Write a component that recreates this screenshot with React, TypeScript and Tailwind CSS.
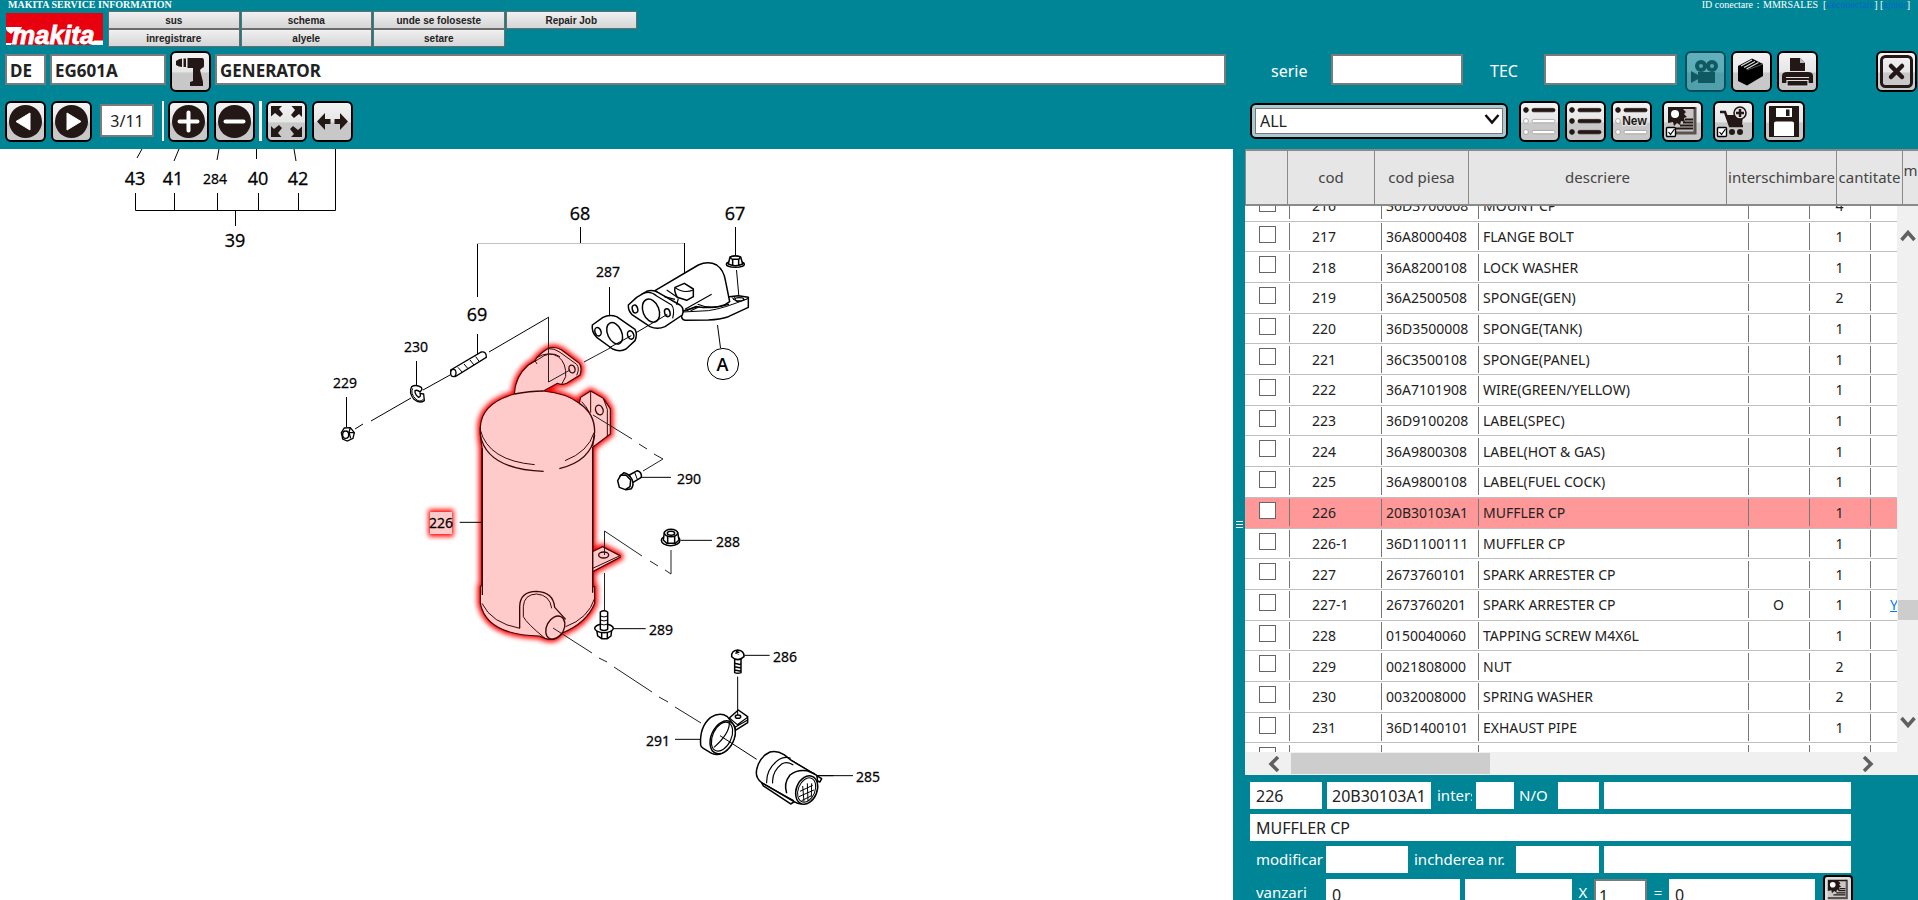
import React from "react";

type Part = {
  code: string;
  number: string;
  name: string;
  swap?: string;
  qty: number;
  note?: string;
};

const parts: Part[] = [
  { code: "216", number: "36D3700008", name: "MOUNT CP", qty: 4 },
  { code: "217", number: "36A8000408", name: "FLANGE BOLT", qty: 1 },
  { code: "218", number: "36A8200108", name: "LOCK WASHER", qty: 1 },
  { code: "219", number: "36A2500508", name: "SPONGE(GEN)", qty: 2 },
  { code: "220", number: "36D3500008", name: "SPONGE(TANK)", qty: 1 },
  { code: "221", number: "36C3500108", name: "SPONGE(PANEL)", qty: 1 },
  { code: "222", number: "36A7101908", name: "WIRE(GREEN/YELLOW)", qty: 1 },
  { code: "223", number: "36D9100208", name: "LABEL(SPEC)", qty: 1 },
  { code: "224", number: "36A9800308", name: "LABEL(HOT & GAS)", qty: 1 },
  { code: "225", number: "36A9800108", name: "LABEL(FUEL COCK)", qty: 1 },
  { code: "226", number: "20B30103A1", name: "MUFFLER CP", qty: 1 },
  { code: "226-1", number: "36D1100111", name: "MUFFLER CP", qty: 1 },
  { code: "227", number: "2673760101", name: "SPARK ARRESTER CP", qty: 1 },
  { code: "227-1", number: "2673760201", name: "SPARK ARRESTER CP", swap: "O", qty: 1, note: "Y" },
  { code: "228", number: "0150040060", name: "TAPPING SCREW M4X6L", qty: 1 },
  { code: "229", number: "0021808000", name: "NUT", qty: 2 },
  { code: "230", number: "0032008000", name: "SPRING WASHER", qty: 2 },
  { code: "231", number: "36D1400101", name: "EXHAUST PIPE", qty: 1 },
];

const INK = "#231815";

function ToolButton({
  label,
  disabled,
  className = "",
  children,
}: {
  label: string;
  disabled?: boolean;
  className?: string;
  children: React.ReactNode;
}) {
  return (
    <button
      type="button"
      aria-label={label}
      disabled={disabled}
      className={`size-[41px] shrink-0 overflow-hidden rounded-md border-2 border-black bg-linear-to-b from-[#f3f3f3] from-0% via-[#e6e6e6] via-50% to-[#c8c8c8] to-55% disabled:opacity-40 ${className}`}
    >
      <svg viewBox="0 0 37 37" className="block size-full">
        {children}
      </svg>
    </button>
  );
}

function ListIcon({ filled, text }: { filled: boolean[]; text?: string }) {
  return (
    <>
      {filled.map((on, i) => {
        const y = 7 + i * 11;
        return (
          <g key={i} fill={on ? INK : "#fff"} stroke={on ? INK : "#999"} strokeWidth="0.8">
            <circle cx="5" cy={y} r="2.4" />
            {!(text && i === 1) && <rect x="11" y={y - 1.6} width="23" height="3.4" rx="1.6" />}
          </g>
        );
      })}
      {text && (
        <text x="21.5" y="22" textAnchor="middle" fontSize="12" fontWeight="700" fontFamily="'Liberation Sans', sans-serif" fill={INK} stroke="#e4e4e4" strokeWidth="2" paintOrder="stroke">
          {text}
        </text>
      )}
    </>
  );
}

function TickBox() {
  return (
    <g>
      <rect x="2.5" y="24.5" width="9" height="9" rx="1" fill="#fff" stroke="#000" strokeWidth="1.4" />
      <path d="M4.500 29l2 2.500 4-5.500" fill="none" stroke="#000" strokeWidth="1.200" />
    </g>
  );
}

function PictureIcon() {
  return (
    <>
      <path d="M4 4h28v27H4z" fill="#c9c6c5" />
      <path d="M31 4v26H4" fill="none" stroke="#5b5351" strokeWidth="3" />
      <path d="M4 4h27v2H19l3 3-2 2 3 3-3 1 1 4-4-1-1 4-3-2-3 3-1-4-5 1z" fill={INK} />
      <circle cx="11" cy="11" r="4" fill="#fff" />
      <path d="M21 16.500h8M19 19.500h10M16 22.500h13M12 25.500h17" stroke={INK} strokeWidth="1.800" />
    </>
  );
}

function Disc() {
  return <circle cx="18.500" cy="18.500" r="16.500" fill={INK} />;
}

function Logo() {
  return (
    <svg viewBox="0 0 97 32" className="mt-0.5 h-8 w-[97px] shrink-0" role="img" aria-label="makita">
      <rect width="97" height="32" fill="#e8000e" />
      <path d="M0 14H16L14 18H8L5 21L1 18L0 16z" fill="#fff" />
      <path d="M0 30H6L5 32H0zM88 27.500H97V32H86z" fill="#fff" />
      <text x="6" y="31" fontFamily="'Liberation Sans', sans-serif" fontSize="26" fontWeight="700" fontStyle="italic" fill="#fff" stroke="#fff" strokeWidth="0.8">
        makita
      </text>
    </svg>
  );
}

function Callout({ x, y, children, narrow }: { x: number; y: number; children: string; narrow?: boolean }) {
  return (
    <text
      x={x}
      y={y}
      textAnchor="middle"
      fontSize={narrow ? 14 : 18}
      fontFamily="'Open Sans', 'Noto Sans', sans-serif"
      fill="#000"
      stroke="#000"
      strokeWidth="0.3"
    >
      {children}
    </text>
  );
}

/* Outline of the muffler body, elbow, bracket, foot tab and outlet. */
const mufflerOutline =
  "M186 770 Q181 750 181 712 Q184 640 283 612 Q285 560 325 525 L345 512 Q352 496 385 475 Q405 468 425 480 L478 520 Q487 532 480 555 L440 580 Q425 586 412 580 L370 603 Q440 610 478 640 L482 622 L512 603 L550 625 L571 657 L571 732 L518 772 L518 1085 L548 1070 L600 1097 L600 1102 L518 1145 L518 1190 L524 1190 L524 1240 Q500 1300 425 1330 Q405 1355 375 1345 L358 1338 Q200 1335 181 1240 L181 1190 L186 1185 Z";

function Diagram() {
  return (
    <svg viewBox="0 149 1233 751" width="1233" height="751" className="block shrink-0" role="img" aria-label="EG601A 3/11">
      <defs>
        <filter id="glow" x="-20%" y="-20%" width="140%" height="140%">
          <feGaussianBlur stdDeviation="8" />
        </filter>
        <filter id="labelGlow" x="-60%" y="-60%" width="220%" height="220%">
          <feGaussianBlur stdDeviation="2.500" />
        </filter>
      </defs>

      <g fill="none" stroke="#000" strokeWidth="1">
        <path d="M142 149L137 158M179 149L174 161M219 149L217 160M256.500 149V159M294 149L296 161" />
        <path d="M335.500 149V210.500H135.500V193M174.500 193V210M217.500 193V210M258.500 193V210M298.500 193V210M235.500 210V226" />
        <path d="M477.500 243V297M477.500 334V354M580.500 227V243M684.500 243V273M735.500 227V256M609.500 287V316M416.500 361V386M346.500 397V427" />
        <path d="M477 243.500H684" stroke="#c4c4c4" />
        <path d="M355 429L363 424M371 421L411 398M423 390L450 375M489 352L549 317" />
        <path d="M717.500 325L720.500 348M736.500 270L739 298" />
        <circle cx="723" cy="364" r="15.600" />
      </g>

      {/* nut 229, lock washer 230 and stud 69 */}
      <g transform="translate(90 140) scale(.33333)" fill="#fff" stroke="#000" strokeWidth="4">
        <path d="M754 878L763 864L781 863L793 878L789 895L772 903L758 897Z" />
        <ellipse cx="767" cy="884" rx="9" ry="11" />
        <path d="M781 863L777 877L782 895M777 877L793 878" fill="none" />
        <path d="M994 742Q978 732 965 740Q955 758 972 778Q988 792 1003 782L1001 762L990 760Q994 770 986 772Q974 764 975 752Q982 748 990 756L996 748Z" strokeLinejoin="round" />
        <path d="M968 745Q960 760 978 778Q990 788 1000 778" fill="none" strokeWidth="3" />
        <path d="M1082 690L1174 636Q1190 634 1189 652L1096 710Q1080 708 1082 690Z" />
        <ellipse cx="1090" cy="699" rx="8" ry="11" />
        <path d="M1104 682L1116 696M1122 672L1134 686M1140 660L1152 675M1157 650L1168 665" strokeWidth="3" />
      </g>

      <path d={mufflerOutline} transform="translate(420 190) scale(.33333)" fill="#f00" stroke="#f00" strokeWidth="18" filter="url(#glow)" />
      <path d={mufflerOutline} transform="translate(420 190) scale(.33333)" fill="#ffcaca" stroke="#4a0000" strokeWidth="3.500" />

      {/* muffler interior lines */}
      <g transform="translate(420 190) scale(.33333)" fill="none" stroke="#3a0505" strokeWidth="4">
        <path d="M283 612Q330 603 370 603M478 640Q524 670 524 725L518 768" />
        <path d="M181 712L181 735Q200 838 371 844M418 836Q515 812 524 735" />
        <path d="M181 720Q205 812 344 824M435 812Q505 785 522 728" strokeWidth="3" />
        <path d="M187 775V1215M518 770V1208" />
        <path d="M345 512L351 522M350 503Q385 482 415 500Q440 520 437 560L425 583M325 525L355 508Q390 480 420 500" strokeWidth="3" />
        <path d="M385 476Q402 474 420 487L470 523Q480 535 470 556" strokeWidth="3" />
        <ellipse cx="456" cy="537" rx="9" ry="12" transform="rotate(-15 456 537)" />
        <path d="M512 603V668M485 635Q500 650 508 668M550 625L562 658V738" strokeWidth="3" />
        <ellipse cx="538" cy="660" rx="11" ry="15" transform="rotate(-20 538 660)" />
        <path d="M518 1085V1145M518 1135L598 1098" strokeWidth="3" />
        <ellipse cx="551" cy="1095" rx="15" ry="9" />
        <path d="M186 1240Q215 1300 300 1315M524 1225Q505 1285 437 1310" strokeWidth="3" />
        <path d="M299 1315V1250Q300 1204 350 1204Q400 1206 404 1252L437 1288" />
        <path d="M310 1280V1250Q312 1213 350 1212Q390 1215 395 1255M310 1280Q320 1300 375 1345" strokeWidth="3" />
        <ellipse cx="406" cy="1313" rx="26" ry="37" transform="rotate(28 406 1313)" />
      </g>

      {/* thin lines that run over the muffler */}
      <g fill="none" stroke="#222" strokeWidth="1">
        <path d="M548.500 317V382L570 370" />
        <path d="M584 362L625 340" />
        <path d="M593 415L632 439M639 444L647 449M654 454L663 459L643 471" />
        <path d="M604.500 555V531L642 556M650 561L658 566M665 570L671 574V550M604.500 573V611" />
        <path d="M553 628L592 653M599 658L607 662M614 667L652 692M659 697L668 702M675 707L701 723" />
      </g>

      {/* gasket 287, manifold 68 and nut 67 */}
      <g transform="translate(420 190) scale(.33333)" fill="#fff" stroke="#000" strokeWidth="4.500" strokeLinejoin="round">
        <path d="M517 405L549 382Q568 372 590 380L645 418Q653 432 645 452L618 477Q600 487 578 477L530 442Q514 425 517 405Z" />
        <ellipse cx="584" cy="430" rx="21" ry="34" transform="rotate(-25 584 430)" />
        <ellipse cx="534" cy="425" rx="9" ry="13" transform="rotate(-20 534 425)" />
        <ellipse cx="632" cy="435" rx="9" ry="13" transform="rotate(-20 632 435)" />

        <path d="M928 320L955 317L985 322V352L925 380Q900 388 865 390L795 391Q783 388 785 375L790 360L860 330Z" />
        <path d="M788 366L865 362Q910 356 985 325" fill="none" strokeWidth="3" />
        <path d="M705 302L835 225Q865 212 890 225Q912 240 917 275L929 335Q900 360 830 350L790 363Z" />
        <path d="M875 313L795 358M830 348L800 362M838 350L812 362M833 343Q870 360 927 343" fill="none" strokeWidth="3.500" />
        <path d="M935 322L950 335L980 328M945 318L940 330" fill="none" strokeWidth="3" />
        <ellipse cx="958" cy="328" rx="13" ry="5" strokeWidth="4" />
        <path d="M625 345L650 322L680 304Q700 298 715 308L780 345Q794 355 787 375L735 410Q712 420 690 410L637 375Q624 362 625 345Z" />
        <path d="M665 312Q690 300 710 318L755 345Q765 358 758 385" fill="none" strokeWidth="3.500" />
        <path d="M765 292L793 280L820 297V320L800 331L772 322Q762 305 765 292Z" />
        <path d="M765 292Q790 312 820 300M740 300L772 322M733 320L765 328M770 345L775 325" fill="none" strokeWidth="3.500" />
        <ellipse cx="693" cy="362" rx="24" ry="36" transform="rotate(-22 693 362)" />
        <ellipse cx="645" cy="357" rx="8" ry="12" transform="rotate(-15 645 357)" />
        <ellipse cx="742" cy="368" rx="8" ry="12" transform="rotate(-15 742 368)" />
        <path d="M568 473L634 437M650 427L742 373" fill="none" strokeWidth="3" />

        <ellipse cx="946" cy="223" rx="27" ry="9" />
        <path d="M925 222L930 201Q946 195 962 201L968 222Q946 232 925 222ZM938 204V226M956 204V226" />
        <ellipse cx="946" cy="203" rx="14" ry="5" />

        {/* bolt 290 */}
        <path d="M628 855L652 842Q666 846 664 862L638 878Z" />
        <path d="M600 858L612 848Q625 850 636 868Q643 885 634 896L618 899Z" />
        <path d="M593 872L602 856L618 855L632 870L630 890L616 899L598 892Z" />
        <path d="M644 847L652 868M662 862H753" fill="none" strokeWidth="3" />
      </g>

      {/* nut 288 and bolt 289 */}
      <g transform="translate(420 460) scale(.33333)" fill="#fff" stroke="#000" strokeWidth="4.500" strokeLinejoin="round">
        <ellipse cx="752" cy="241" rx="28" ry="16" />
        <path d="M730 240L733 217Q752 203 773 217L777 240L767 250H740ZM743 225V250M764 225V250" />
        <ellipse cx="753" cy="219" rx="20" ry="11" />
        <ellipse cx="753" cy="220" rx="11" ry="6" />
        <path d="M783 241H876M580 506H677M119 187H186" strokeWidth="3" />
        <path d="M530 510L533 528L545 536H562L573 528L575 510ZM545 518V536M562 518V536" />
        <ellipse cx="552" cy="505" rx="28" ry="13" />
        <path d="M541 508V456Q552 448 563 456V508Q552 515 541 508Z" />
        <path d="M541 468Q552 474 563 468M541 480Q552 486 563 480M541 492Q552 498 563 492" fill="none" strokeWidth="3" />
      </g>

      {/* screw 286, clamp 291 and spark arrester 285 */}
      <g transform="translate(620 630) scale(.33333)" fill="#fff" stroke="#000" strokeWidth="4.500" strokeLinejoin="round">
        <path d="M344 88H363V128Q353 132 344 128ZM344 100L363 104M344 110L363 114M344 120L363 124" />
        <path d="M335 80Q333 62 353 60Q373 62 372 80Q353 98 335 80ZM346 70L358 66M349 63L356 73" />
        <path d="M373 76H449M165 328H241M590 437H699" strokeWidth="3" />
        <path d="M328 264L355 240L383 260V278L345 302L322 280Z" />
        <path d="M328 264L352 284L383 262M345 292L383 270" fill="none" strokeWidth="3.500" />
        <path d="M242 345Q238 290 272 262Q300 245 322 260L345 290Q352 325 320 360Q300 380 275 370L250 355Q242 350 242 345Z" />
        <ellipse cx="308" cy="322" rx="34" ry="52" transform="rotate(25 308 322)" />
        <ellipse cx="306" cy="320" rx="28" ry="46" transform="rotate(25 306 320)" strokeWidth="3.500" />
        <path d="M328 276Q330 310 282 352" fill="none" strokeWidth="3.500" />
        <ellipse cx="354" cy="260" rx="8" ry="5" />
        <path d="M353 140V255M300 317L410 388" strokeWidth="3" />
        <path d="M425 458L430 468L512 522L528 512L520 490ZM515 392L605 446L600 456L585 450Z" />
        <path d="M425 458Q402 440 412 412Q420 380 450 366Q470 360 492 374L515 392L590 436Q600 470 570 512Q545 530 522 515Z" />
        <path d="M440 460Q438 415 478 388Q495 378 512 385M458 460Q455 425 485 402Q500 392 520 405M425 458L522 512" fill="none" strokeWidth="3.500" />
        <path d="M500 490Q490 460 510 435Q530 418 560 422L585 432" fill="none" />
        <path d="M590 437H640" fill="none" strokeWidth="3" />
        <ellipse cx="560" cy="480" rx="31" ry="44" transform="rotate(22 560 480)" />
        <ellipse cx="560" cy="480" rx="25" ry="38" transform="rotate(22 560 480)" strokeWidth="3" />
        <path d="M540 484L578 466M537 500L582 480M545 512L575 497M548 468L552 515M562 460L564 512M575 460L574 500" fill="none" strokeWidth="3" />
      </g>

      <rect x="431" y="512" width="20" height="22" fill="#f00" stroke="#f00" strokeWidth="5" filter="url(#labelGlow)" />
      <rect x="430" y="512" width="22" height="22" fill="#ffcaca" />

      <Callout x={135} y={185}>43</Callout>
      <Callout x={173} y={185}>41</Callout>
      <Callout x={215} y={184} narrow>284</Callout>
      <Callout x={258} y={185}>40</Callout>
      <Callout x={298} y={185}>42</Callout>
      <Callout x={235} y={247}>39</Callout>
      <Callout x={477} y={321}>69</Callout>
      <Callout x={580} y={220}>68</Callout>
      <Callout x={735} y={220}>67</Callout>
      <Callout x={608} y={277} narrow>287</Callout>
      <Callout x={416} y={352} narrow>230</Callout>
      <Callout x={345} y={388} narrow>229</Callout>
      <Callout x={689} y={484} narrow>290</Callout>
      <Callout x={441} y={528} narrow>226</Callout>
      <Callout x={728} y={547} narrow>288</Callout>
      <Callout x={661} y={635} narrow>289</Callout>
      <Callout x={785} y={662} narrow>286</Callout>
      <Callout x={658} y={746} narrow>291</Callout>
      <Callout x={868} y={782} narrow>285</Callout>
      <text x="722.500" y="371" textAnchor="middle" fontSize="18" fontWeight="600" fontFamily="'Open Sans', sans-serif">
        A
      </text>
    </svg>
  );
}

const menuClass =
  "h-[18px] border border-[#6b6b6b] bg-linear-to-b from-[#f0f0f0] to-[#d6d6d6] pt-px text-center font-['Liberation_Sans',sans-serif] text-[10px] leading-4 font-bold text-[#222]";
const topField = "mt-[3px] h-[31px] shrink-0 border-2 border-[#7a7a7a] bg-white px-[3px] pt-0.5 text-[17px] text-[#222]";
const formField = "h-[27px] shrink-0 bg-white px-1.5 text-base text-[#222]";

const rule = "bg-[linear-gradient(#777,#777)] bg-[length:1px_27px] bg-left bg-no-repeat p-0";
const head = "border-r border-b-2 border-[#8a8a8a] p-0 font-normal";

export default function App() {
  return (
    <div className="flex h-screen flex-col overflow-hidden bg-[#008597] font-['Noto_Sans','Open_Sans',sans-serif] text-[#222]">
      <header className="shrink-0">
        <div className="flex h-[11px] justify-between px-2 font-['Liberation_Serif',serif] text-[10px] leading-[10px] font-bold whitespace-pre text-white">
          <h1>MAKITA SERVICE INFORMATION</h1>
          <p className="font-normal">
            ID conectare：MMRSALES  [<a href="#logout" className="text-[#0066cc]">deconectare</a>] [<a href="#help" className="text-[#0066cc]">ajutor</a>]
          </p>
        </div>

        <div className="flex h-10 items-start gap-[5px] pl-1.5">
          <Logo />
          <nav className="grid w-[529px] grid-cols-4 gap-x-px">
            <button type="button" className={menuClass}>sus</button>
            <button type="button" className={menuClass}>schema</button>
            <button type="button" className={menuClass}>unde se foloseste</button>
            <button type="button" className={menuClass}>Repair Job</button>
            <button type="button" className={menuClass}>inregistrare</button>
            <button type="button" className={menuClass}>alyele</button>
            <button type="button" className={menuClass}>setare</button>
          </nav>
        </div>

        <div className="flex h-[50px] items-start">
          <div className="flex flex-1 items-start gap-1 pr-[7px] pl-[5px]">
            <input aria-label="DE" defaultValue="DE" className={`${topField} w-[41px] font-bold`} />
            <input aria-label="model" defaultValue="EG601A" className={`${topField} w-[116px] font-bold`} />
            <ToolButton label="model">
              <path d="M4 8Q7 5.500 10 5.500V14Q7 14 4 12zM11.500 5.500H14V14H11.500zM15.500 5H30Q32 5 32 8V13Q32 15 30 15L28 17L31 29V33H18V29L21 28V15H15.500z" fill={INK} />
            </ToolButton>
            <input aria-label="GENERATOR" defaultValue="GENERATOR" className={`${topField} w-auto min-w-0 flex-1 shrink font-bold`} />
          </div>
          <div className="flex w-[685px] shrink-0 items-start pl-[38px]">
            <label htmlFor="serie" className="w-[60px] pt-2 text-base leading-6 text-white">serie</label>
            <input id="serie" className={`${topField} mr-[27px] w-[132px]`} />
            <label htmlFor="tec" className="w-[54px] pt-2 text-base leading-6 text-white">TEC</label>
            <input id="tec" className={`${topField} w-[133px]`} />
            <div className="ml-2 flex gap-[5px]">
              <ToolButton label="video" disabled>
                <path d="M11 19h17v11H11zM4 18l7 4v4l-7 4z" fill={INK} />
                <g fill="#ddd" stroke={INK} strokeWidth="4">
                  <circle cx="14" cy="13" r="4" />
                  <circle cx="25" cy="13" r="4" />
                </g>
              </ToolButton>
              <ToolButton label="manual">
                <path d="M5 13L19 5.500L30 11V23L14 32.500L5 28z" fill="#000" />
                <path d="M8 13l11-6M11 14.500l11-6M13.500 16l12-6.500" stroke="#ddd" strokeWidth="1.200" />
                <path d="M14 17L30 11" stroke="#555" strokeWidth="1" />
              </ToolButton>
              <ToolButton label="print">
                <path d="M11 5H21L26 10V18H11z" fill={INK} />
                <path d="M21 5v5h5" fill="#bbb" />
                <path d="M8 19H29Q34 19 34 23V30H3V23Q3 19 8 19z" fill={INK} />
                <path d="M7 24.500H30M8 27.500H29V33H8z" fill={INK} stroke="#ddd" strokeWidth="1.200" />
              </ToolButton>
            </div>
            <ToolButton label="close" className="mr-px ml-auto">
              <rect x="3.500" y="3.500" width="30" height="30" rx="4" fill="none" stroke={INK} strokeWidth="3" />
              <path d="M13 13L24 24M24 13L13 24" stroke={INK} strokeWidth="4.500" strokeLinecap="round" />
            </ToolButton>
          </div>
        </div>

        <div className="flex h-12 items-start">
          <div className="flex flex-1 items-start gap-[5px] pl-[5px]">
            <ToolButton label="previous page">
              <Disc />
              <path d="M9 18.500L23 10V27z" fill="#fff" stroke="#fff" strokeLinejoin="round" />
            </ToolButton>
            <ToolButton label="next page">
              <Disc />
              <path d="M28 18.500L14 10V27z" fill="#fff" stroke="#fff" strokeLinejoin="round" />
            </ToolButton>
            <input aria-label="page" defaultValue="3/11" className="mx-[3px] mt-[3px] h-[33px] w-[54px] border-2 border-[#7a7a7a] bg-white text-center text-base" />
            <div className="flex items-start gap-1">
              <div className="h-10 w-0.5 bg-white" />
              <ToolButton label="zoom in">
                <Disc />
                <path d="M18.500 9.500V27.500M9.500 18.500H27.500" stroke="#fff" strokeWidth="4" strokeLinecap="round" />
              </ToolButton>
            </div>
            <div className="flex items-start gap-1">
              <ToolButton label="zoom out">
                <Disc />
                <path d="M9.500 18.500H27.500" stroke="#fff" strokeWidth="4" strokeLinecap="round" />
              </ToolButton>
              <div className="h-10 w-[3px] bg-white" />
              <ToolButton label="fit page">
                <g fill={INK}>
                  {[0, 90, 180, 270].map((turn) => (
                    <path key={turn} transform={`rotate(${turn} 18.500 18.500)`} d="M3 3H14L11 6L15 11L12 14L7 10L3 13.500z" />
                  ))}
                </g>
              </ToolButton>
            </div>
            <ToolButton label="fit width">
              <path d="M3 18.500L11 10V16H16.500V21H11V27zM34 18.500L26 10V16H20.500V21H26V27z" fill={INK} />
            </ToolButton>
          </div>
          <div className="flex w-[685px] shrink-0 items-start pl-[17px]">
            <div className="relative mt-0.5 h-9 w-[258px] rounded-md border-2 border-black bg-[#a9c9ce] p-[3px]">
              <select aria-label="filter" className="block h-full w-full appearance-none border border-[#777] bg-white pl-1 text-base text-[#222]">
                <option>ALL</option>
              </select>
              <svg viewBox="0 0 16 12" className="pointer-events-none absolute top-2 right-1.5 h-3 w-4">
                <path d="M1.500 2L8 9.500L14.500 2" fill="none" stroke="#111" strokeWidth="2.500" />
              </svg>
            </div>
            <div className="ml-[11px] flex gap-[5px]">
              <ToolButton label="selected items"><ListIcon filled={[true, false, false]} /></ToolButton>
              <ToolButton label="all items"><ListIcon filled={[true, true, true]} /></ToolButton>
              <ToolButton label="new items"><ListIcon filled={[true, false, false]} text="New" /></ToolButton>
            </div>
            <div className="ml-2.5 flex gap-2.5">
              <ToolButton label="picture"><PictureIcon /><TickBox /></ToolButton>
              <ToolButton label="cart">
                <path d="M5 9H10L15 23H28" fill="none" stroke={INK} strokeWidth="2.500" />
                <path d="M11 12H28L27 22H15z" fill={INK} />
                <circle cx="17" cy="29" r="3" fill={INK} />
                <circle cx="25" cy="29" r="3" fill={INK} />
                <circle cx="25" cy="10" r="6" fill="#e6e6e6" stroke={INK} strokeWidth="1.600" />
                <path d="M25 6V14M21 10H29" stroke={INK} strokeWidth="2.500" />
                <TickBox />
              </ToolButton>
              <ToolButton label="save">
                <path d="M3 3H33V34H3z" fill={INK} />
                <path d="M10 5H26V14H10z" fill="#fff" />
                <path d="M20 6.500H23.500V13H20z" fill={INK} />
                <path d="M8 20Q8 18.500 10 18.500H26Q28 18.500 28 20V33H8z" fill="#fff" />
              </ToolButton>
            </div>
          </div>
        </div>
      </header>

      <main className="flex min-h-0 flex-1">
        <section className="min-w-0 flex-1 overflow-hidden bg-white">
          <Diagram />
        </section>

        <div className="flex w-3 shrink-0 items-center justify-center" role="separator" aria-orientation="vertical">
          <svg viewBox="0 0 7 7" className="size-[7px]">
            <path d="M0 .5H7M0 3.500H7M0 6.500H7" stroke="#fff" strokeWidth="1" />
          </svg>
        </div>

        <aside className="flex w-[673px] shrink-0 flex-col">
          <table className="h-[57px] w-full shrink-0 table-fixed border-collapse border-t-2 border-l border-[#8a8a8a] bg-[#e6e6e6] text-center text-[15px] text-[#444]">
            <colgroup>
              <col className="w-[42px]" />
              <col className="w-[87px]" />
              <col className="w-[94px]" />
              <col className="w-[258px]" />
              <col className="w-[110px]" />
              <col className="w-[66px]" />
              <col />
            </colgroup>
            <thead>
              <tr>
                <th className={head} aria-label="select" />
                <th className={head}>cod</th>
                <th className={head}>cod piesa</th>
                <th className={head}>descriere</th>
                <th className={head}>interschimbare</th>
                <th className={head}>cantitate</th>
                <th className="border-b-2 border-[#8a8a8a] p-0 pt-2 align-top font-normal">m</th>
              </tr>
            </thead>
          </table>

          <div className="flex min-h-0 flex-1">
            <div className="min-w-0 flex-1 overflow-hidden bg-white">
              <table className="-mt-[15px] h-[582px] w-full table-fixed border-collapse text-[14px]">
                <colgroup>
                  <col className="w-11" />
                  <col className="w-[92px]" />
                  <col className="w-[97px]" />
                  <col className="w-[270px]" />
                  <col className="w-[61px]" />
                  <col className="w-[61px]" />
                  <col />
                </colgroup>
                <tbody>
                  {parts.map((p) => (
                    <tr key={p.code} className={`border-b border-[#c0c0c0] ${p.code === "226" ? "bg-[#ff9999]" : ""}`}>
                      <td className="p-0 pl-3.5 align-top">
                        <input type="checkbox" aria-label={p.code} className="mt-1 block size-[17px] appearance-none border border-[#666] bg-white" />
                      </td>
                      <td className={`${rule} pl-[23px]`}>{p.code}</td>
                      <td className={`${rule} pl-[5px]`}>{p.number}</td>
                      <td className={`${rule} pl-[5px]`}>{p.name}</td>
                      <td className={`${rule} text-center`}>{p.swap}</td>
                      <td className={`${rule} text-center`}>{p.qty}</td>
                      <td className={`${rule} overflow-hidden pl-5`}>
                        {p.note && <a href="#note" className="text-[#0078ff] underline">{p.note}</a>}
                      </td>
                    </tr>
                  ))}
                  <tr>
                    <td className="p-0 pl-3.5 align-top">
                      <input type="checkbox" aria-label="232" className="mt-1 block size-[17px] appearance-none border border-[#666] bg-white" />
                    </td>
                    <td className={rule} />
                    <td className={rule} />
                    <td className={rule} />
                    <td className={rule} />
                    <td className={rule} />
                    <td className={rule} />
                  </tr>
                </tbody>
              </table>
            </div>
            <div className="flex w-[21px] shrink-0 flex-col items-center bg-[#f0f0f0] pt-6 pb-6">
              <svg viewBox="0 0 16 12" className="h-3 w-4 shrink-0">
                <path d="M1.500 10L8 2.500L14.500 10" fill="none" stroke="#606060" strokeWidth="3.500" />
              </svg>
              <div className="mt-[358px] h-5 w-5 shrink-0 bg-[#cdcdcd]" />
              <svg viewBox="0 0 16 12" className="mt-auto h-3 w-4 shrink-0">
                <path d="M1.500 2L8 9.500L14.500 2" fill="none" stroke="#606060" strokeWidth="3.500" />
              </svg>
            </div>
          </div>

          <div className="flex h-[23px] shrink-0 items-center bg-[#f0f0f0] pr-[43px] pl-[22px]">
            <svg viewBox="0 0 14 16" className="h-4 w-3.5">
              <path d="M11 1L4 8L11 15" fill="none" stroke="#606060" strokeWidth="3.500" />
            </svg>
            <div className="ml-2.5 h-[21px] w-[199px] bg-[#cdcdcd]" />
            <svg viewBox="0 0 14 16" className="ml-auto h-4 w-3.5">
              <path d="M3 1L10 8L3 15" fill="none" stroke="#606060" strokeWidth="3.500" />
            </svg>
          </div>

          <form className="flex h-[125px] shrink-0 flex-col gap-[5px] overflow-hidden pt-[7px] pl-[5px] text-[15px] leading-[27px] text-white">
            <div className="flex w-[601px]">
              <input aria-label="cod" defaultValue="226" className={`${formField} w-[72px]`} />
              <input aria-label="cod piesa" defaultValue="20B30103A1" className={`${formField} ml-[5px] w-[104px] px-[5px]`} />
              <label htmlFor="swap" className="ml-1.5 w-[35px] overflow-hidden whitespace-nowrap">interschimbare</label>
              <input id="swap" className={`${formField} ml-1 w-[38px]`} />
              <label htmlFor="no" className="w-11 pl-[5px]">N/O</label>
              <input id="no" className={`${formField} w-[41px]`} />
              <input aria-label="N/O info" className={`${formField} ml-[5px] w-auto min-w-0 flex-1`} />
            </div>
            <div className="flex w-[601px]">
              <input aria-label="descriere" defaultValue="MUFFLER CP" className={`${formField} w-full`} />
            </div>
            <div className="flex w-[601px]">
              <label htmlFor="mod" className="w-[76px] pl-1.5">modificar</label>
              <input id="mod" className={`${formField} w-[82px]`} />
              <label htmlFor="close-no" className="w-[108px] pl-1.5">inchderea nr.</label>
              <input id="close-no" className={`${formField} w-[83px]`} />
              <input aria-label="nr. info" className={`${formField} ml-[5px] w-auto min-w-0 flex-1`} />
            </div>
            <div className="flex w-[603px] pt-px">
              <label htmlFor="sale" className="w-[76px] pl-1.5">vanzari</label>
              <input id="sale" defaultValue="0" className={`${formField} w-[134px] pt-1`} />
              <input aria-label="moneda" className={`${formField} ml-[5px] w-[107px]`} />
              <label htmlFor="qty" className="w-[22px] text-center">X</label>
              <input id="qty" defaultValue="1" className="h-[29px] w-[53px] border-2 border-[#7a7a7a] bg-white px-[3px] pt-1 text-base text-[#222]" />
              <label htmlFor="total" className="w-[22px] text-center">=</label>
              <input id="total" defaultValue="0" className={`${formField} w-[146px] pt-1`} />
              <div className="-mt-1 ml-auto h-[25px] w-[30px]">
                <button type="button" aria-label="picture" className="size-[30px] rounded border-2 border-black bg-[#ddd]">
                  <svg viewBox="0 0 37 37" className="block size-full"><PictureIcon /></svg>
                </button>
              </div>
            </div>
          </form>
        </aside>
      </main>
    </div>
  );
}
